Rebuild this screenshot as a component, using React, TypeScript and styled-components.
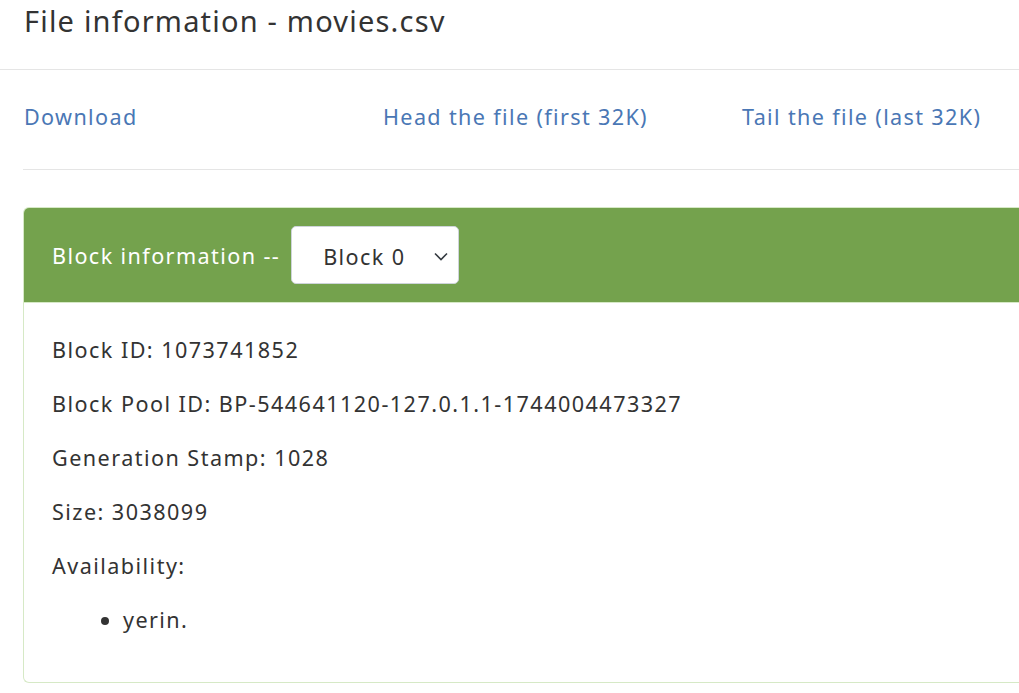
import React from "react";
import styled, { createGlobalStyle } from "styled-components";

const Global = createGlobalStyle`
  html, body { margin: 0; padding: 0; background: #fff; }
  body { font-family: "Noto Sans", "Noto Sans CJK KR", sans-serif; color: #333; }
`;

const Page = styled.div`
  width: 1019px;
  height: 693px;
  overflow: hidden;
  background: #fff;
`;

const Header = styled.div`
  height: 69px;
  border-bottom: 1px solid #e5e5e5;
  padding: 0 24px;
  display: flex;
  align-items: flex-start;
`;

const Title = styled.h4`
  margin: 0;
  font-size: 29px;
  font-weight: 400;
  line-height: 42px;
  letter-spacing: 1.2px;
  color: #333;
`;

const Body = styled.div`
  padding: 0 0 0 23px;
`;

const LinkRow = styled.div`
  display: grid;
  grid-template-columns: 359px 359px 359px;
  align-items: center;
  border-bottom: 1px solid #e5e5e5;
  padding-bottom: 6px;
  box-sizing: border-box;
  height: 100px;
`;

const Link = styled.a`
  color: #4a77b5;
  font-size: 21.6px;
  letter-spacing: 1.35px;
  text-decoration: none;
  padding-left: 1px;
`;

const Panel = styled.div`
  margin-top: 37px;
  border: 1px solid #d6e9c6;
  border-right: none;
  border-radius: 6px 0 0 6px;
  overflow: hidden;
`;

const PanelHeading = styled.div`
  background: #74a24d;
  height: 94px;
  display: flex;
  align-items: center;
  padding-left: 28px;
  color: #fff;
  font-size: 21.6px;
  letter-spacing: 1.4px;
  gap: 11px;
  border-bottom: 1px solid #d6e9c6;
`;

const SelectBox = styled.div`
  width: 168px;
  height: 58px;
  background: #fff;
  border: 1px solid #ced4da;
  border-radius: 5px;
  display: flex;
  align-items: center;
  justify-content: space-between;
  padding: 2px 10px 0 31px;
  box-sizing: border-box;
  color: #333;
  font-size: 21.6px;
  letter-spacing: 1.4px;
`;

const PanelBody = styled.div`
  padding: 31px 28px 22px;
`;

const Para = styled.p`
  margin: 0 0 21.6px;
  font-size: 21.6px;
  line-height: 32.4px;
  letter-spacing: 1.45px;
  color: #333;
`;

const List = styled.ul`
  margin: 0 0 23.6px;
  padding-left: 71px;
  font-size: 21.6px;
  line-height: 32.4px;
  letter-spacing: 1.4px;
  color: #333;
`;

export default function App() {
  return (
    <Page>
      <Global />
      <Header>
        <Title>File information - movies.csv</Title>
      </Header>
      <Body>
        <LinkRow>
          <Link href="#">Download</Link>
          <Link href="#">Head the file (first 32K)</Link>
          <Link href="#">Tail the file (last 32K)</Link>
        </LinkRow>
        <Panel>
          <PanelHeading>
            Block information --
            <SelectBox>
              Block 0
              <svg width="14" height="9" viewBox="0 0 14 9" fill="none">
                <path d="M1 1.5 L7 7.5 L13 1.5" stroke="#343a40" strokeWidth="1.6" />
              </svg>
            </SelectBox>
          </PanelHeading>
          <PanelBody>
            <Para>Block ID: 1073741852</Para>
            <Para>Block Pool ID: BP-544641120-127.0.1.1-1744004473327</Para>
            <Para>Generation Stamp: 1028</Para>
            <Para>Size: 3038099</Para>
            <Para>Availability:</Para>
            <List>
              <li>yerin.</li>
            </List>
          </PanelBody>
        </Panel>
      </Body>
    </Page>
  );
}
